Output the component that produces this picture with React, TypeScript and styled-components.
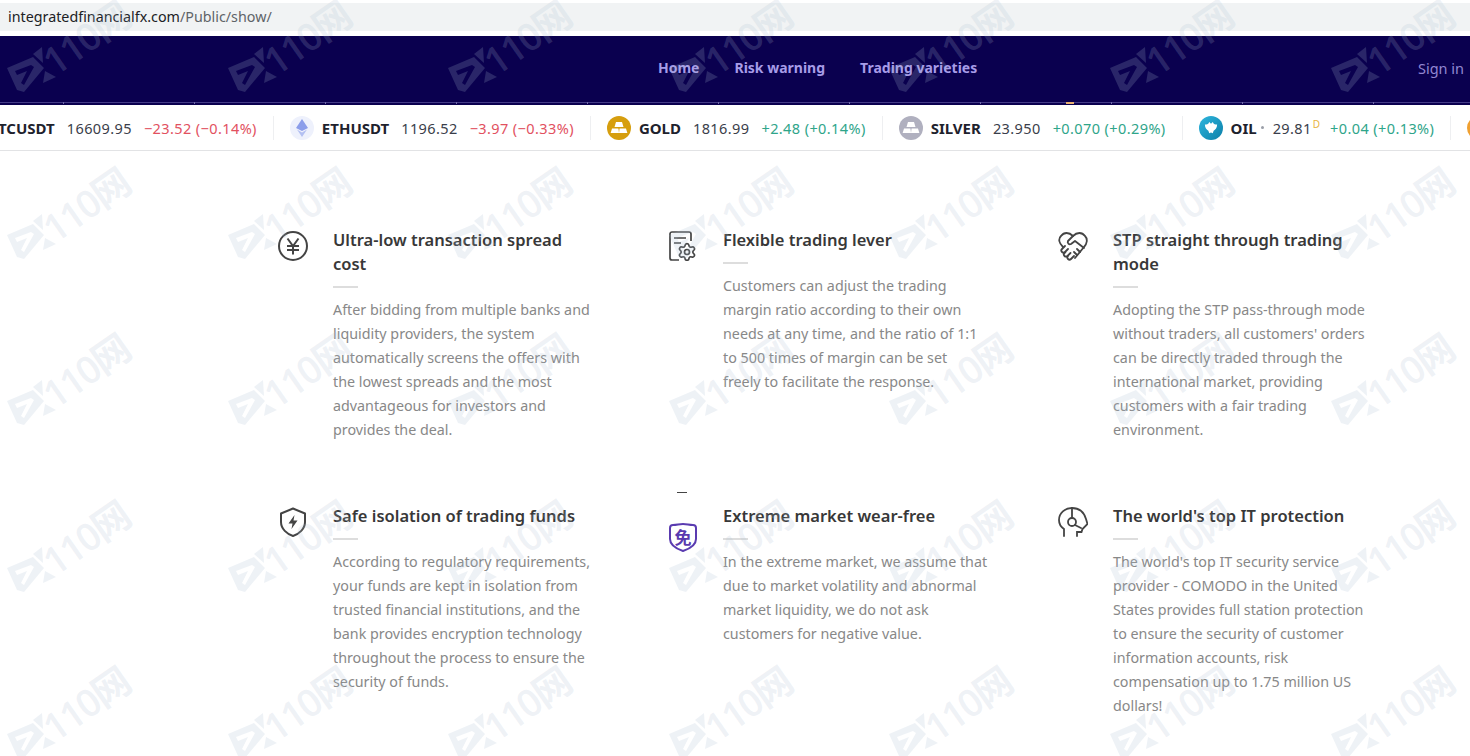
import React from 'react';
import styled, { createGlobalStyle } from 'styled-components';
import { Settings } from 'lucide-react';

const GlobalStyle = createGlobalStyle`
  html, body {
    margin: 0;
    padding: 0;
    background: #ffffff;
  }
  body {
    font-family: "Noto Sans", "Open Sans", sans-serif;
  }
`;

const Page = styled.div`
  position: relative;
  width: 1470px;
  height: 756px;
  overflow: hidden;
  background: #ffffff;
`;

const AddressWrap = styled.div`
  height: 36px;
  padding-top: 3px;
  box-sizing: border-box;
`;

const AddressBar = styled.div`
  height: 28px;
  padding-left: 8px;
  background: #f1f3f4;
  font-size: 14.3px;
  line-height: 28px;
  color: #5f6368;
`;

const Host = styled.span`
  color: #202124;
`;

const Nav = styled.nav`
  height: 65px;
  box-sizing: border-box;
  padding-bottom: 2px;
  display: flex;
  align-items: center;
  background: #0a004f;
`;

const ChartEdge = styled.div`
  height: 4px;
  background:
    linear-gradient(#e8b070 0 0) 1066px 1px / 8px 2px no-repeat,
    repeating-linear-gradient(90deg, transparent 0 63px, #6f68a8 63px 64px, transparent 64px 131px) 0 1px / 100% 2px no-repeat,
    linear-gradient(#443b86 0 0) 0 1px / 100% 1px no-repeat,
    #0a004f;
`;

const NavLinks = styled.div`
  display: flex;
  gap: 35px;
  margin-left: 658px;
`;

const NavLink = styled.a`
  font-size: 14px;
  font-weight: 700;
  color: #a79ce8;
`;

const SignIn = styled.a`
  margin-left: auto;
  margin-right: 6px;
  font-size: 14.5px;
  color: #9287d2;
`;

const Ticker = styled.div`
  height: 46px;
  box-sizing: border-box;
  display: flex;
  align-items: center;
  overflow: hidden;
  border-bottom: 1px solid #e2e3e5;
`;

const Track = styled.div`
  display: flex;
  align-items: center;
  flex: none;
  margin-left: -28px;
`;

const TickerItem = styled.div`
  display: flex;
  align-items: center;
  flex: none;
  padding: 0 16px;
  height: 24px;
  border-right: 1px solid #eeeff1;
  font-size: 14.5px;
  white-space: nowrap;
`;

const TickerIcon = styled.span<{ $bg: string }>`
  width: 24px;
  height: 24px;
  flex: none;
  margin-right: 8px;
  border-radius: 50%;
  background: ${(p) => p.$bg};
  display: flex;
  align-items: center;
  justify-content: center;
`;

const Symbol = styled.span`
  font-size: 15px;
  font-weight: 700;
  color: #1e222d;
`;

const Price = styled.span`
  margin-left: 12px;
  color: #3a3e4a;
  letter-spacing: 0.4px;
`;

const Change = styled.span<{ $up?: boolean }>`
  margin-left: 12px;
  letter-spacing: 0.4px;
  color: ${(p) => (p.$up ? '#2fa58a' : '#e2515f')};
`;

const Dot = styled.span`
  margin: 0 -3px 0 4px;
  width: 3px;
  height: 3px;
  border-radius: 50%;
  background: #9a9ea8;
`;

const Delayed = styled.span`
  font-size: 10px;
  line-height: 1;
  margin: 0 -2px 0 1px;
  align-self: flex-start;
  padding-top: 3px;
  color: #e8b33f;
`;

const Main = styled.main`
  display: grid;
  grid-template-columns: repeat(3, 390px);
  row-gap: 62px;
  padding: 77px 0 0 278px;
`;

const Card = styled.section`
  display: flex;
  gap: 25px;
`;

const IconBox = styled.div<{ $top?: number }>`
  position: relative;
  flex: none;
  width: 30px;
  height: 30px;
  margin-top: ${(p) => p.$top ?? 3}px;
  color: #444444;
`;

const Stray = styled.span`
  position: absolute;
  left: 9px;
  top: -31px;
  width: 10px;
  height: 1px;
  background: #444444;
`;

const Body = styled.div`
  width: 265px;
`;

const Title = styled.h3`
  margin: 0;
  max-width: 262px;
  font-size: 16.5px;
  font-weight: 600;
  line-height: 24px;
  color: #383838;
`;

const Rule = styled.div`
  width: 25px;
  height: 2px;
  margin: 10px 0;
  background: #dddddd;
`;

const Text = styled.p`
  margin: 0;
  font-size: 14.3px;
  line-height: 24px;
  color: #888888;
`;

const Watermarks = styled.div`
  position: absolute;
  inset: 0;
  pointer-events: none;
  display: grid;
  grid-template-columns: repeat(7, 220.6px);
  grid-auto-rows: 166.6px;
`;

const Mark = styled.svg`
  display: block;
  width: 135px;
  height: 89px;
  overflow: visible;
  fill: rgba(170, 190, 210, 0.2);
`;

const MarkText = styled.text`
  font-family: "Open Sans", "Noto Sans CJK SC", sans-serif;
  font-size: 38px;
  font-weight: 600;
  letter-spacing: -2px;
`;

function WatermarkTile() {
  return (
    <Mark viewBox="0 0 135 89">
      <path
        fillRule="evenodd"
        d="M7 68 33 57 44 68 24 92 17 90ZM15 71 31 65 34 67 24 85 21 83 27 71 17 75Z"
      />
      <polygon points="33,54 42,47 43,63" />
      <polygon points="45,71 56,77 43,83" />
      <MarkText x="55" y="77" transform="rotate(-35 55 77)">
        110网
      </MarkText>
    </Mark>
  );
}

const EthIcon = () => (
  <svg width="14" height="20" viewBox="0 0 14 20">
    <polygon points="7,1 13,10 7,13 1,10" fill="#8c9eea" />
    <polygon points="7,14.500 12,11.500 7,19 2,11.500" fill="#b3c0f2" />
  </svg>
);

const BarsIcon = () => (
  <svg width="18" height="12" viewBox="0 0 18 12" fill="#ffffff">
    <polygon points="6,0 12,0 13.500,5 4.500,5" />
    <polygon points="2,6.500 8.400,6.500 9,11 0.600,11" />
    <polygon points="9.600,6.500 16,6.500 17.400,11 9,11" />
  </svg>
);

const OilIcon = () => (
  <svg width="14" height="14" viewBox="0 0 16 16" fill="#ffffff">
    <path d="M1 4c2 0 4 0 5-3l2 2 2-2c1 3 3 3 5 3 0 4-2 6-4 7l-1 3-2-1-2 1-1-3C3 10 1 8 1 4z" />
  </svg>
);

const YenIcon = () => (
  <svg width="30" height="30" viewBox="0 0 30 30" fill="none" stroke="currentColor" strokeWidth="2">
    <circle cx="15" cy="15" r="14" />
    <path d="M9.500 7.500 15 15l5.500-7.500M9 15h12M9 19h12M15 15v8.500" />
  </svg>
);

const DocGearIcon = () => (
  <svg width="30" height="30" viewBox="0 0 30 30" fill="none" stroke="currentColor" strokeWidth="1.7">
    <path d="M11 29H4a2 2 0 0 1-2-2V3a2 2 0 0 1 2-2h17a2 2 0 0 1 2 2v7" />
    <path d="M6 7h12M6 12h7" />
    <Settings x={9} y={11} width={20} height={20} strokeWidth={2} />
  </svg>
);

const HandshakeIcon = () => (
  <svg width="30" height="30" viewBox="0 0 30 30" fill="none" stroke="currentColor" strokeWidth="1.8" strokeLinecap="round" strokeLinejoin="round">
    <path d="M5 16C1 12 0 8 3 5c3-4 8-4 12 0 4-4 9-4 12 0 3 3 2 8-1 11L17 27" />
    <path d="M15 5 10 10c-1 2 1 4 3 3l4-3 9 7" />
    <path d="M7 15l-3 3a2 2 0 0 0 3 3l3-3M7.500 21 6.500 22a2 2 0 0 0 3 3l3-3M10 25a2 2 0 0 0 3 3l3-3" />
    <path d="M22 21l-3-3M19 24l-3-3" />
  </svg>
);

const ShieldBoltIcon = () => (
  <svg width="30" height="30" viewBox="0 0 30 30" fill="none" stroke="currentColor" strokeWidth="2">
    <path d="M15 1.500 27 6.500V15c0 7-6 12-12 14C9 27 3 22 3 15V6.500z" strokeLinejoin="round" />
    <path d="M16.500 8 10.500 16.500h4L13.500 22l6-8.500h-4z" fill="currentColor" stroke="none" />
  </svg>
);

const ShieldText = styled.text`
  font-family: "Noto Sans CJK SC", sans-serif;
  font-size: 17px;
  font-weight: 700;
  fill: #5a3bb0;
`;

const FreeIcon = () => (
  <svg width="30" height="30" viewBox="0 0 30 30" fill="none" stroke="#5a3bb0" strokeWidth="2">
    <path d="M2 5c0-2 1-3 3-3 4 0 6-1 10-1s6 1 10 1c2 0 3 1 3 3v11c0 6-7 10-13 12C9 26 2 22 2 16z" />
    <ShieldText x="15" y="21" textAnchor="middle" stroke="none">
      免
    </ShieldText>
  </svg>
);

const HeadIcon = () => (
  <svg width="30" height="30" viewBox="0 0 30 30" fill="none" stroke="currentColor" strokeWidth="1.8" strokeLinecap="round">
    <path d="M6 29v-7C3 20 1 17 1 13 1 6 7 1 14 1s12 4 14 11l1.500 5-5 5-1 3-4.500 0v4" />
    <path d="M14 1v10M17 18l6 3" />
    <circle cx="14" cy="15" r="4" />
  </svg>
);

const cards = [
  {
    icon: <YenIcon />,
    title: 'Ultra-low transaction spread cost',
    text: 'After bidding from multiple banks and liquidity providers, the system automatically screens the offers with the lowest spreads and the most advantageous for investors and provides the deal.',
  },
  {
    icon: <DocGearIcon />,
    title: 'Flexible trading lever',
    text: 'Customers can adjust the trading margin ratio according to their own needs at any time, and the ratio of 1:1 to 500 times of margin can be set freely to facilitate the response.',
  },
  {
    icon: <HandshakeIcon />,
    title: 'STP straight through trading mode',
    text: "Adopting the STP pass-through mode without traders, all customers' orders can be directly traded through the international market, providing customers with a fair trading environment.",
  },
  {
    icon: <ShieldBoltIcon />,
    title: 'Safe isolation of trading funds',
    text: 'According to regulatory requirements, your funds are kept in isolation from trusted financial institutions, and the bank provides encryption technology throughout the process to ensure the security of funds.',
  },
  {
    icon: <FreeIcon />,
    top: 19,
    stray: true,
    title: 'Extreme market wear-free',
    text: 'In the extreme market, we assume that due to market volatility and abnormal market liquidity, we do not ask customers for negative value.',
  },
  {
    icon: <HeadIcon />,
    title: "The world's top IT protection",
    text: "The world's top IT security service provider - COMODO in the United States provides full station protection to ensure the security of customer information accounts, risk compensation up to 1.75 million US dollars!",
  },
];

export default function App() {
  return (
    <Page>
      <GlobalStyle />
      <AddressWrap>
        <AddressBar>
          <Host>integratedfinancialfx.com</Host>/Public/show/
        </AddressBar>
      </AddressWrap>
      <Nav>
        <NavLinks>
          <NavLink>Home</NavLink>
          <NavLink>Risk warning</NavLink>
          <NavLink>Trading varieties</NavLink>
        </NavLinks>
        <SignIn>Sign in</SignIn>
      </Nav>
      <ChartEdge />
      <Ticker>
        <Track>
          <TickerItem>
            <Symbol>BTCUSDT</Symbol>
            <Price>16609.95</Price>
            <Change>−23.52 (−0.14%)</Change>
          </TickerItem>
          <TickerItem>
            <TickerIcon $bg="#eef1fc">
              <EthIcon />
            </TickerIcon>
            <Symbol>ETHUSDT</Symbol>
            <Price>1196.52</Price>
            <Change>−3.97 (−0.33%)</Change>
          </TickerItem>
          <TickerItem>
            <TickerIcon $bg="#d69e0e">
              <BarsIcon />
            </TickerIcon>
            <Symbol>GOLD</Symbol>
            <Price>1816.99</Price>
            <Change $up>+2.48 (+0.14%)</Change>
          </TickerItem>
          <TickerItem>
            <TickerIcon $bg="#b0b0bf">
              <BarsIcon />
            </TickerIcon>
            <Symbol>SILVER</Symbol>
            <Price>23.950</Price>
            <Change $up>+0.070 (+0.29%)</Change>
          </TickerItem>
          <TickerItem>
            <TickerIcon $bg="linear-gradient(135deg, #2fb6de, #0c7fa8)">
              <OilIcon />
            </TickerIcon>
            <Symbol>OIL</Symbol>
            <Dot />
            <Price>29.81</Price>
            <Delayed>D</Delayed>
            <Change $up>+0.04 (+0.13%)</Change>
          </TickerItem>
          <TickerItem>
            <TickerIcon $bg="#f0a030" />
          </TickerItem>
        </Track>
      </Ticker>
      <Main>
        {cards.map((card) => (
          <Card key={card.title}>
            <IconBox $top={card.top}>
              {card.stray && <Stray />}
              {card.icon}
            </IconBox>
            <Body>
              <Title>{card.title}</Title>
              <Rule />
              <Text>{card.text}</Text>
            </Body>
          </Card>
        ))}
      </Main>
      <Watermarks>
        {Array.from({ length: 35 }).map((_, i) => (
          <WatermarkTile key={i} />
        ))}
      </Watermarks>
    </Page>
  );
}
